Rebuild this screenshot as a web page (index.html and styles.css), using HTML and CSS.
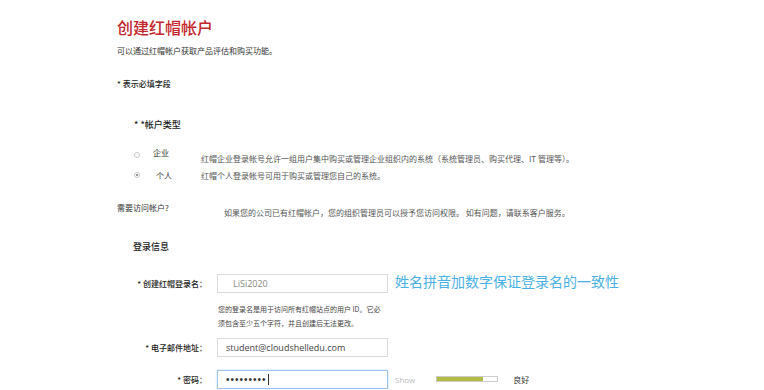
FILE: index.html
```html
<!DOCTYPE html>
<html lang="zh-CN">

<head>
    <meta charset="UTF-8">
    <meta name="viewport" content="width=device-width, initial-scale=1.0">
    <title>创建红帽帐户</title>
    <link rel="stylesheet" href="styles.css">
</head>

<body>
    <div class="page">
        <h1>创建红帽帐户</h1>
        <p class="intro">可以通过红帽帐户获取产品评估和购买功能。</p>
        <p class="required-note">* 表示必填字段</p>

        <!-- Account type -->
        <div class="account-type">
            <h3>* *帐户类型</h3>
            <div class="type-row">
                <span class="radio"></span>
                <span class="type-name name-corp">企业</span>
                <span class="type-desc desc-corp">红帽企业登录帐号允许一组用户集中购买或管理企业组织内的系统（系统管理员、购买代理、IT 管理等）。</span>
            </div>
            <div class="type-row">
                <span class="radio checked"></span>
                <span class="type-name name-personal">个人</span>
                <span class="type-desc">红帽个人登录帐号可用于购买或管理您自己的系统。</span>
            </div>
        </div>

        <div class="access-row">
            <span class="access-label">需要访问帐户?</span>
            <span class="access-desc">如果您的公司已有红帽帐户，您的组织管理员可以授予您访问权限。 如有问题，请联系客户服务。</span>
        </div>

        <!-- Login info -->
        <div class="login-info">
            <h3>登录信息</h3>

            <div class="field-row">
                <label class="field-label">* 创建红帽登录名：</label>
                <div class="field-input first">LiSi2020</div>
                <span class="note">姓名拼音加数字保证登录名的一致性</span>
            </div>
            <p class="field-help">您的登录名是用于访问所有红帽站点的用户 ID。它必<br>须包含至少五个字符，并且创建后无法更改。</p>

            <div class="field-row email-row">
                <label class="field-label">* 电子邮件地址：</label>
                <div class="field-input">student@cloudshelledu.com</div>
            </div>

            <div class="field-row password-row">
                <label class="field-label">* 密码：</label>
                <div class="field-input focused"><span class="dots">&bull;&bull;&bull;&bull;&bull;&bull;&bull;&bull;&bull;</span><span class="caret"></span></div>
                <span class="show-link">Show</span>
                <div class="strength">
                    <div class="strength-fill" style="width: 76%"></div>
                </div>
                <span class="strength-text">良好</span>
            </div>
        </div>
    </div>
</body>

</html>
```

FILE: styles.css
```css
/* Basic Reset */
* {
    margin: 0;
    padding: 0;
    box-sizing: border-box;
}

body {
    font-family: "Noto Sans CJK SC", "Noto Sans", sans-serif;
    background-color: #fff;
    color: #333;
    overflow: hidden;
}

.page {
    padding: 18px 0 0 117px;
}

/* Header */
h1 {
    font-size: 16px;
    line-height: 18px;
    font-weight: 500;
    color: #c4262b;
}

.intro {
    margin-top: 10px;
    font-size: 8px;
    line-height: 10px;
    color: #333;
}

.required-note {
    margin-top: 23px;
    font-size: 8px;
    line-height: 10px;
    font-weight: 500;
    color: #222;
}

/* Account type */
.account-type {
    margin-top: 30px;
    padding-left: 17px;
}

.account-type h3 {
    font-size: 9px;
    line-height: 12px;
    font-weight: 500;
    color: #222;
}

.type-row {
    display: flex;
    align-items: center;
    height: 20px;
    font-size: 8px;
    color: #555;
}

.type-row:first-of-type {
    margin-top: 14px;
}

.radio {
    width: 6px;
    height: 6px;
    border: 1px solid #c8c8c8;
    border-radius: 50%;
    position: relative;
}

.radio.checked::after {
    content: "";
    position: absolute;
    left: 1px;
    top: 1px;
    width: 2px;
    height: 2px;
    border-radius: 50%;
    background-color: #777;
}

.type-name {
    margin-left: 13px;
    width: 48px;
    color: #333;
}

.name-personal {
    padding-left: 3px;
}

.name-corp {
    position: relative;
    top: -3px;
}

.desc-corp {
    position: relative;
    top: 3px;
}

/* Access row */
.access-row {
    display: flex;
    margin-top: 18px;
    font-size: 8px;
    line-height: 10px;
}

.access-label {
    width: 107px;
    color: #333;
}

.access-desc {
    padding-top: 5px;
    color: #555;
}

/* Login info */
.login-info {
    margin-top: 23px;
    padding-left: 16px;
}

.login-info h3 {
    font-size: 9px;
    line-height: 12px;
    font-weight: 500;
    color: #222;
}

.field-row {
    display: flex;
    align-items: center;
    margin-left: -16px;
    height: 20px;
}

.login-info h3 + .field-row {
    margin-top: 20px;
}

.field-label {
    width: 90px;
    text-align: right;
    font-size: 8px;
    font-weight: 500;
    color: #222;
}

.field-input {
    margin-left: 10px;
    width: 171px;
    height: 19px;
    border: 1px solid #dcdcdc;
    padding-left: 8px;
    display: flex;
    align-items: center;
    font-family: "Open Sans", sans-serif;
    font-size: 9px;
    color: #444;
}

.field-input.first {
    color: #888;
    padding-left: 15px;
}

.field-input.focused {
    border-color: #9ec4ea;
    box-shadow: 0 0 2px rgba(100, 160, 230, 0.4);
    color: #333;
}

.dots {
    font-family: "Liberation Sans", sans-serif;
    font-size: 10px;
    letter-spacing: 1px;
}

.caret {
    display: inline-block;
    width: 1px;
    height: 11px;
    margin-left: 1px;
    background-color: #333;
}

.note {
    margin-left: 7px;
    font-size: 14px;
    color: #4ab0e6;
    position: relative;
    top: -2px;
}

.field-help {
    margin: 9px 0 0 85px;
    font-size: 7px;
    line-height: 14px;
    color: #444;
}

.email-row {
    margin-top: 7px;
}

.password-row {
    margin-top: 12px;
}

.show-link {
    margin-left: 7px;
    font-family: "Open Sans", sans-serif;
    font-size: 8px;
    color: #bbb;
}

.strength {
    margin-left: 21px;
    width: 62px;
    height: 6px;
    border: 1px solid #ccc;
    background-color: #fff;
}

.strength-fill {
    height: 100%;
    background-color: #b3bb47;
}

.strength-text {
    margin-left: 15px;
    font-size: 8px;
    color: #333;
}
```
